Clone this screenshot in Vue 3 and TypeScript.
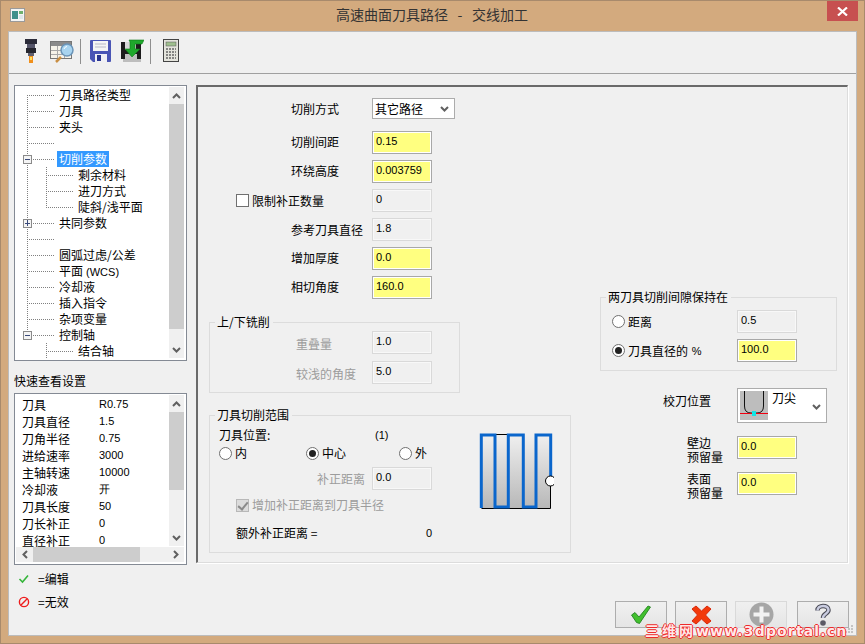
<script setup lang="ts">
interface TreeRow { text: string; level: number; selected?: boolean; latin?: string }
const treeRows: TreeRow[] = [
  { text: '刀具路径类型', level: 0 }, { text: '刀具', level: 0 }, { text: '夹头', level: 0 }, { text: '', level: 0 },
  { text: '切削参数', level: 0, selected: true }, { text: '剩余材料', level: 1 }, { text: '进刀方式', level: 1 }, { text: '陡斜/浅平面', level: 1 },
  { text: '共同参数', level: 0 }, { text: '', level: 0 }, { text: '圆弧过虑/公差', level: 0 }, { text: '平面', latin: ' (WCS)', level: 0 },
  { text: '冷却液', level: 0 }, { text: '插入指令', level: 0 }, { text: '杂项变量', level: 0 }, { text: '控制轴', level: 0 }, { text: '结合轴', level: 1 }
]
const mainStubs = [95, 111, 127, 143, 159, 223, 239, 255, 271, 287, 303, 319, 335]
const subStubs = [175, 191, 207, 351]
const quick: [string, string][] = [
  ['刀具', 'R0.75'], ['刀具直径', '1.5'], ['刀角半径', '0.75'], ['进给速率', '3000'], ['主轴转速', '10000'],
  ['冷却液', '开'], ['刀具长度', '50'], ['刀长补正', '0'], ['直径补正', '0']
]
const formRows = [
  { label: '切削间距', value: '0.15', cls: 'on' },
  { label: '环绕高度', value: '0.003759', cls: 'on' }
]
const lowerRows = [
  { label: '参考刀具直径', value: '1.8', cls: 'off extra' },
  { label: '增加厚度', value: '0.0', cls: 'on' },
  { label: '相切角度', value: '160.0', cls: 'on' }
]
</script>

<template>
  <div class="window">
    <div class="titlebar">
      <div class="title-left">
        <svg width="15" height="14" viewBox="0 0 15 14">
          <rect x="0.5" y="0.5" width="14" height="13" fill="#f4f4f4" stroke="#9a9a9a" />
          <rect x="2" y="3" width="6" height="8" fill="#3f8f8a" />
          <rect x="9" y="3" width="4" height="3" fill="#6db06d" />
          <rect x="9" y="7" width="4" height="4" fill="#dfe6ea" />
        </svg>
      </div>
      <div class="title-text">高速曲面刀具路径 - 交线加工</div>
      <div class="title-right">
        <div class="close">
          <svg width="11" height="9" viewBox="0 0 11 9"><path d="M1 0.5 L10 8.5 M10 0.5 L1 8.5" stroke="#fff" stroke-width="2.2" /></svg>
        </div>
      </div>
    </div>

    <div class="client">
      <div class="toolbar">
        <svg class="t1" width="12" height="24" viewBox="0 0 12 24">
          <rect x="0" y="0" width="12" height="5" fill="#2c2c3a" />
          <rect x="2" y="5" width="8" height="4" fill="#55556a" />
          <rect x="1" y="9" width="10" height="5" fill="#26262f" />
          <rect x="3" y="14" width="6" height="3" fill="#60606e" />
          <rect x="4" y="17" width="4" height="7" fill="#f0901c" />
          <rect x="5" y="18" width="2" height="3" fill="#ffe060" />
        </svg>
        <svg class="t2" width="24" height="23" viewBox="0 0 24 23">
          <rect x="0.5" y="1.5" width="21" height="17" fill="#f6f3ea" stroke="#777" />
          <rect x="1" y="2" width="20" height="4" fill="#8a8a8a" />
          <path d="M1 10.5H21M1 14.5H21M7.5 6V18M14.5 6V18" stroke="#a9a9a9" />
          <path d="M11 17 L6 22" stroke="#c98f45" stroke-width="2.5" />
          <circle cx="17" cy="10" r="6" fill="#a8d4f0" stroke="#6a94b8" stroke-width="1.5" />
          <path d="M14 9 A3.5 3.5 0 0 1 17 6.5" stroke="#fff" fill="none" />
        </svg>
        <span class="sep s1"></span>
        <svg class="t3" width="21" height="22" viewBox="0 0 21 22">
          <path d="M1 0H20Q21 0 21 1V21Q21 22 20 22H3L0 19V1Q0 0 1 0Z" fill="#4a55b5" />
          <rect x="3" y="1" width="15" height="10" fill="#f4f4f4" />
          <path d="M5 4H16M5 7H16" stroke="#b8b8c8" />
          <rect x="5" y="14" width="12" height="8" fill="#f0f0f4" />
          <rect x="7" y="15" width="4" height="6" fill="#2a3590" />
        </svg>
        <svg class="t4" width="23" height="23" viewBox="0 0 23 23">
          <rect x="0" y="3" width="20" height="17" fill="#1c1c1c" />
          <rect x="4" y="3" width="11" height="8" fill="#d8d8d8" />
          <rect x="4" y="15" width="12" height="5" fill="#c0c0c0" />
          <rect x="2" y="20" width="18" height="3" fill="#bdbdbd" />
          <path d="M8 1H23L21 5H14V10H19L11 18L4 10H9V3Z" fill="#1fa82c" stroke="#0f7a1a" stroke-width="0.6" />
        </svg>
        <span class="sep s2"></span>
        <svg class="t5" width="16" height="23" viewBox="0 0 16 23">
          <rect x="0.5" y="0.5" width="15" height="22" fill="#e4e4dc" stroke="#444" />
          <rect x="3" y="3" width="10" height="4" fill="#9fbf8e" stroke="#555" stroke-width="0.5" />
          <path d="M3 10H13M3 13H13M3 16H13M3 19H13" stroke="#666" stroke-width="1.6" stroke-dasharray="2 1" />
        </svg>
      </div>

      <div class="body">
        <div class="left">
          <div class="tree">
            <div class="tree-rows">
              <svg class="tree-lines" width="154" height="273" viewBox="15 86 154 273">
                <g stroke="#808080" stroke-dasharray="1 1" fill="none" shape-rendering="crispEdges">
                  <path d="M27.5 95V335M46.5 167V207M46.5 343V360" />
                  <path v-for="y in mainStubs" :key="y" :d="`M27 ${y + 0.5}H54`" />
                  <path v-for="y in subStubs" :key="'s' + y" :d="`M46 ${y + 0.5}H73`" />
                </g>
                <g v-for="y in [159, 223, 335]" :key="'b' + y" shape-rendering="crispEdges">
                  <rect x="23.5" :y="y - 4" width="8" height="8" fill="#f4f4f4" stroke="#8a8a8a" />
                  <path :d="`M25 ${y + 0.5}H30`" stroke="#3a4a7a" />
                  <path v-if="y === 223" d="M27.5 220V226" stroke="#3a4a7a" />
                </g>
              </svg>
              <div v-for="(r, i) in treeRows" :key="i" class="tree-row" :class="'lv' + r.level">
                <span v-if="r.text" :class="{ selected: r.selected }">{{ r.text }}<span v-if="r.latin" class="num">{{ r.latin }}</span></span>
              </div>
            </div>
            <div class="vbar tree-bar">
              <div class="btn"><svg width="9" height="6" viewBox="0 0 9 6"><path d="M1 5L4.5 1.5L8 5" class="chev" /></svg></div>
              <div class="thumb tree-thumb"></div>
              <div class="spring"></div>
              <div class="btn"><svg width="9" height="6" viewBox="0 0 9 6"><path d="M1 1L4.5 4.5L8 1" class="chev" /></svg></div>
            </div>
          </div>

          <div class="quick-label">快速查看设置</div>
          <div class="list">
            <div class="list-top">
              <div class="list-rows">
                <div v-for="q in quick" :key="q[0]" class="list-row">
                  <span class="col1">{{ q[0] }}</span><span class="num">{{ q[1] }}</span>
                </div>
              </div>
              <div class="vbar list-bar">
                <div class="btn"><svg width="9" height="6" viewBox="0 0 9 6"><path d="M1 5L4.5 1.5L8 5" class="chev" /></svg></div>
                <div class="thumb list-thumb"></div>
                <div class="spring"></div>
                <div class="btn"><svg width="9" height="6" viewBox="0 0 9 6"><path d="M1 1L4.5 4.5L8 1" class="chev" /></svg></div>
              </div>
            </div>
            <div class="hbar">
              <div class="btn"><svg width="6" height="9" viewBox="0 0 6 9"><path d="M5 1L1.5 4.5L5 8" class="chev" /></svg></div>
              <div class="hthumb"></div>
              <div class="spring"></div>
              <div class="btn"><svg width="6" height="9" viewBox="0 0 6 9"><path d="M1 1L4.5 4.5L1 8" class="chev" /></svg></div>
            </div>
          </div>

          <div class="legend-row first">
            <svg width="12" height="10" viewBox="0 0 12 10"><path d="M1.5 5L4.5 8L10 1.5" stroke="#35b53a" stroke-width="1.6" fill="none" /></svg>
            <span>=编辑</span>
          </div>
          <div class="legend-row">
            <svg width="12" height="12" viewBox="0 0 12 12"><circle cx="6" cy="6" r="4.6" fill="none" stroke="#ee1c1c" stroke-width="1.4" /><path d="M2.8 9.2L9.2 2.8" stroke="#ee1c1c" stroke-width="1.4" /></svg>
            <span>=无效</span>
          </div>
        </div>

        <div class="right">
          <div class="panel">
            <div class="pane-left">
              <div class="row select-row">
                <span class="lab lab-main flat">切削方式</span>
                <div class="select"><span>其它路径</span><svg width="9" height="6" viewBox="0 0 9 6"><path d="M1 1L4.5 4.5L8 1" class="chev" /></svg></div>
              </div>
              <div v-for="r in formRows" :key="r.label" class="row">
                <span class="lab lab-main">{{ r.label }}</span>
                <span class="field" :class="r.cls">{{ r.value }}</span>
              </div>
              <div class="row">
                <span class="lab lab-check"><i class="check"></i>限制补正数量</span>
                <span class="field off">0</span>
              </div>
              <div v-for="r in lowerRows" :key="r.label" class="row" :class="{ extra: r.cls.includes('extra') }">
                <span class="lab lab-main">{{ r.label }}</span>
                <span class="field" :class="r.cls">{{ r.value }}</span>
              </div>

              <fieldset class="group g1">
                <legend>上/下铣削</legend>
                <div class="row tight"><span class="lab lab-sub gray">重叠量</span><span class="field off">1.0</span></div>
                <div class="row tight second"><span class="lab lab-sub gray">较浅的角度</span><span class="field off">5.0</span></div>
              </fieldset>

              <fieldset class="group g2">
                <legend>刀具切削范围</legend>
                <div class="g2-inner">
                  <div class="g2-form">
                    <div class="line pos-line"><span class="pos-label">刀具位置:</span><span class="num">(1)</span></div>
                    <div class="line radios">
                      <label class="radio-item w87"><i class="radio"></i>内</label>
                      <label class="radio-item w93"><i class="radio on-dot"></i>中心</label>
                      <label class="radio-item"><i class="radio"></i>外</label>
                    </div>
                    <div class="row tight comp"><span class="lab lab-comp gray">补正距离</span><span class="field off">0.0</span></div>
                    <div class="line add-line gray"><i class="check checked"></i>增加补正距离到刀具半径</div>
                    <div class="line extra-line"><span class="extra-label">额外补正距离 =</span><span class="num">0</span></div>
                  </div>
                  <svg class="diagram" width="75" height="78" viewBox="479 433 75 78">
                    <defs>
                      <linearGradient id="fade" x1="0" y1="0" x2="0" y2="1">
                        <stop offset="0" stop-color="#f0f0f0" />
                        <stop offset="1" stop-color="#b8b8b8" />
                      </linearGradient>
                    </defs>
                    <rect x="481" y="434" width="70" height="74" fill="url(#fade)" />
                    <path d="M481.5 508.5H550.5V481M495 434.5H508" stroke="#000" fill="none" />
                    <path d="M481.3 508V435H495V507H508.3V435H523.3V507H536V435H550.7V481" stroke="#0a66cc" stroke-width="3" fill="none" />
                    <circle cx="550.5" cy="481" r="5" fill="#fff" stroke="#000" />
                  </svg>
                </div>
              </fieldset>
            </div>

            <div class="pane-right">
              <fieldset class="group g3">
                <legend>两刀具切削间隙保持在</legend>
                <div class="gap-row first">
                  <label class="radio-item gap-label"><i class="radio"></i>距离</label>
                  <span class="field off">0.5</span>
                </div>
                <div class="gap-row">
                  <label class="radio-item gap-label"><i class="radio on-dot"></i>刀具直径的 <span class="num pct">%</span></label>
                  <span class="field on">100.0</span>
                </div>
              </fieldset>

              <div class="combo-row">
                <span class="combo-label">校刀位置</span>
                <div class="combo">
                  <svg width="28" height="29" viewBox="0 0 28 29">
                    <rect width="28" height="29" fill="#bdbdbd" />
                    <path d="M4.5 0V15Q4.5 22 11 22H17Q23.5 22 23.5 15V0" fill="none" stroke="#111" />
                    <path d="M0 22.5H28" stroke="#f00010" />
                    <rect x="12" y="20" width="4" height="5" fill="#12e5e5" />
                  </svg>
                  <span class="combo-text">刀尖</span>
                  <svg class="combo-chev" width="9" height="6" viewBox="0 0 9 6"><path d="M1 1L4.5 4.5L8 1" class="chev" /></svg>
                </div>
              </div>

              <div class="stock-row first">
                <span class="stock-label">壁边<br />预留量</span>
                <span class="field on">0.0</span>
              </div>
              <div class="stock-row">
                <span class="stock-label">表面<br />预留量</span>
                <span class="field on">0.0</span>
              </div>
            </div>
          </div>

          <div class="buttons">
            <div class="bt">
              <svg width="22" height="20" viewBox="0 0 22 20"><path d="M1.500 10L5 7.500L9 12L18 1L20.500 2L9.500 18.500L6.500 17.500Z" fill="#42c02e" stroke="#1a7a1a" stroke-width="0.8" /></svg>
            </div>
            <div class="bt">
              <svg width="21" height="20" viewBox="0 0 21 20"><path d="M1 4L5 1L10.500 6L16 1L20 4L14.500 10L20 16L16 19L10.500 14L5 19L1 16L6.500 10Z" fill="#f23a0c" stroke="#d8280a" /></svg>
            </div>
            <div class="bt dim">
              <svg width="25" height="25" viewBox="0 0 25 25"><circle cx="12.500" cy="12.500" r="12" fill="#a6a6a6" /><path d="M12.500 4.500V20.500M4.500 12.500H20.500" stroke="#f2f2f2" stroke-width="4" /></svg>
            </div>
            <div class="bt last">
              <svg width="18" height="23" viewBox="0 0 18 23">
                <path d="M3.500 7.500C3.500 1.500 14.500 1.500 14.500 7C14.500 11 9 10.500 9 15" fill="none" stroke="#4a4a55" stroke-width="4.500" />
                <path d="M3.500 7.500C3.500 1.500 14.500 1.500 14.500 7C14.500 11 9 10.500 9 15" fill="none" stroke="#c9cce0" stroke-width="2.500" />
                <circle cx="9" cy="20" r="2.800" fill="#5a5a66" />
              </svg>
            </div>
          </div>
        </div>
      </div>
    </div>

    <svg class="grip" width="9" height="9" viewBox="0 0 9 9"><path d="M6 1h2v2h-2zM3 4h2v2h-2zM6 4h2v2h-2zM0 7h2v2h-2zM3 7h2v2h-2zM6 7h2v2h-2z" fill="#c4c4c4" /></svg>
    <div class="watermark"><span class="wm-cjk">三维网</span>www.3dportal.cn</div>
  </div>
</template>

<style>
html, body { margin: 0; padding: 0; background: #d3aa7e; }
</style>

<style scoped>
.window {
  position: relative;
  box-sizing: border-box;
  width: 865px;
  height: 644px;
  display: flex;
  flex-direction: column;
  background: #d3aa7e;
  border: 1px solid #a88a6c;
  overflow: hidden;
  font: 12px/16px "Liberation Sans", "Noto Sans CJK SC", sans-serif;
  color: #000;
}
.titlebar {
  height: 30px;
  flex: none;
  display: grid;
  grid-template-columns: 1fr auto 1fr;
}
.title-left { padding: 7px 0 0 9px; }
.title-text {
  font-size: 14px;
  line-height: 27px;
  word-spacing: 6.5px;
  color: #333;
  font-family: "Noto Sans CJK SC", "Liberation Sans", sans-serif;
  margin-left: -1px;
}
.title-right { display: flex; justify-content: flex-end; padding-right: 6px; }
.close {
  width: 31px;
  height: 20px;
  background: #c75050;
  display: flex;
  align-items: center;
  justify-content: center;
}
.client {
  flex: 1;
  margin: 0 7px 7px;
  background: #f0f0f0;
  border: 1px solid #bcbcbc;
  display: flex;
  flex-direction: column;
  min-height: 0;
}
.toolbar {
  box-sizing: border-box;
  height: 42px;
  flex: none;
  display: flex;
  align-items: flex-start;
  padding: 7px 0 0 16px;
  border-bottom: 1px solid #a0a0a0;
}
.toolbar svg { flex: none; }
.t2 { margin-left: 13px; margin-top: 1px; }
.sep { width: 1px; height: 25px; background: #8e8e8e; flex: none; }
.s1 { margin-left: 6px; }
.t3 { margin-left: 9px; margin-top: 1px; }
.t4 { margin-left: 10px; }
.s2 { margin-left: 6px; }
.t5 { margin-left: 12px; }

.body { display: flex; padding: 11px 0 0 5px; flex: 1; min-height: 0; }
.left { width: 173px; flex: none; }
.right { margin-left: 9px; width: 652px; flex: none; }

.tree {
  box-sizing: border-box;
  height: 276px;
  border: 1px solid #848a94;
  background: #fff;
  display: flex;
}
.tree-rows { position: relative; flex: 1; padding-top: 1px; overflow: hidden; font-family: "Noto Sans CJK SC", "Liberation Sans", sans-serif; }
.tree-lines { position: absolute; left: 0; top: 0; }
.tree-row { position: relative; height: 16px; white-space: pre; line-height: 16px; }
.lv0 { padding-left: 42px; }
.lv1 { padding-left: 61px; }
.tree-row > span { display: inline-block; padding: 0 2px; height: 16px; }
.selected { background: #3399ff; color: #fff; }
.vbar { width: 15px; flex: none; display: flex; flex-direction: column; background: #f0f0f0; }
.tree-bar { margin: 1px 2px 2px 0; }
.btn { flex: none; width: 15px; height: 17px; display: flex; align-items: center; justify-content: center; }
.spring { flex: 1; }
.thumb { background: #cdcdcd; flex: none; }
.tree-thumb { height: 225px; }
.list-thumb { height: 78px; }
.chev { fill: none; stroke: #606060; stroke-width: 2; }

.quick-label { margin-top: 12px; height: 16px; line-height: 16px; font-family: "Noto Sans CJK SC", sans-serif; }
.list {
  box-sizing: border-box;
  margin-top: 4px;
  height: 172px;
  border: 1px solid #848a94;
  background: #fff;
  display: flex;
  flex-direction: column;
}
.list-top { height: 153px; display: flex; flex: none; }
.list-rows { flex: 1; overflow: hidden; padding-top: 2px; }
.list-bar { margin: 1px 2px 1px 0; }
.list-row { height: 17px; line-height: 17px; padding-left: 7px; display: flex; white-space: nowrap; }
.col1 { width: 77px; font-family: "Noto Sans CJK SC", sans-serif; }
.hbar { height: 15px; margin: 0 2px 2px 1px; display: flex; background: #f0f0f0; }
.hbar .btn { height: 15px; width: 17px; }
.hthumb { width: 107px; background: #cdcdcd; }
.legend-row { display: flex; align-items: center; height: 16px; margin-top: 7px; padding-left: 4px; }
.legend-row.first { margin-top: 6px; }
.legend-row svg { flex: none; width: 12px; }
.legend-row span { margin-left: 8px; font-family: "Noto Sans CJK SC", sans-serif; }

.num { font-family: "Liberation Sans", sans-serif; font-size: 11px; }

.panel {
  box-sizing: border-box;
  height: 478px;
  display: flex;
  background: #f0f0f0;
  border-style: solid;
  border-color: #6a6a6a #dcdcdc #dcdcdc #6a6a6a;
  border-width: 2px 1px 1px 2px;
  box-shadow: 1px 1px 0 #fff;
  font-family: "Noto Sans CJK SC", "Liberation Sans", sans-serif;
}
.pane-left { width: 374px; flex: none; padding-top: 11px; }
.pane-right { flex: 1; padding-left: 28px; }

.row { display: flex; align-items: center; height: 23px; margin-bottom: 6px; }
.row.extra { margin-top: 1px; }
.select-row { height: 21px; margin-bottom: 12px; }
.lab { box-sizing: border-box; flex: none; white-space: nowrap; }
.lab-main { width: 174px; padding: 0 0 2px 93px; }
.lab-main.flat, .row.extra .lab-main { padding-bottom: 0; }
.lab-check { width: 174px; padding-left: 38px; display: flex; align-items: center; }
.lab-sub { width: 162px; padding: 2px 0 0 86px; }
.lab-comp { width: 162px; padding-left: 107px; }
.gray { color: #9c9c9c; }

.field {
  box-sizing: border-box;
  flex: none;
  width: 60px;
  height: 23px;
  padding: 0 0 0 3px;
  font: 11px/18px "Liberation Sans", sans-serif;
  color: #000;
}
.field.on { background: #ffff80; border: 1px solid #a8a8a8; box-shadow: inset 0 0 0 1px #fff; }
.field.off { background: #f0f0f0; border: 1px solid #d9d9d9; box-shadow: inset 0 0 0 1px #f8f8f8; }

.select {
  box-sizing: border-box;
  width: 83px;
  height: 21px;
  background: #fff;
  border: 1px solid #acacac;
  display: flex;
  align-items: center;
  justify-content: space-between;
  padding: 0 5px 0 2px;
}

.check {
  box-sizing: border-box;
  display: inline-block;
  width: 13px;
  height: 13px;
  border: 1px solid #707070;
  background: #fff;
  margin-right: 3px;
  flex: none;
  position: relative;
}
.check.checked { background: #dcdcdc; border-color: #b8b8b8; }
.check.checked::after {
  content: "";
  position: absolute;
  left: 3px;
  top: 0;
  width: 4px;
  height: 8px;
  border: solid #8a8a8a;
  border-width: 0 2px 2px 0;
  transform: rotate(40deg);
}
.radio {
  box-sizing: border-box;
  display: inline-block;
  width: 13px;
  height: 13px;
  border: 1px solid #707070;
  border-radius: 50%;
  background: #fff;
  margin-right: 3px;
  flex: none;
  position: relative;
}
.radio.on-dot::after {
  content: "";
  position: absolute;
  left: 2px;
  top: 2px;
  width: 7px;
  height: 7px;
  border-radius: 50%;
  background: #222;
}
.radio-item { display: flex; align-items: center; white-space: pre; }

.group {
  margin: 0;
  padding: 0;
  min-width: 0;
  box-sizing: border-box;
  border: 1px solid #dcdcdc;
}
.group legend { padding: 0 3px 0 2px; margin-left: 5px; line-height: 14px; height: 14px; }
.g1 { margin: 16px 0 0 11px; width: 251px; padding: 2px 0 8px; }
.row.tight { margin-bottom: 0; }
.row.second { margin-top: 7px; }
.g2 { margin: 15px 0 0 11px; width: 362px; padding-bottom: 11px; }
.g2-inner { display: flex; }
.g2-form { width: 269px; flex: none; padding-top: 5px; }
.line { height: 16px; display: flex; align-items: center; white-space: nowrap; }
.pos-line { padding-left: 9px; }
.pos-label { width: 156px; }
.radios { margin-top: 2px; padding-left: 9px; }
.w87 { width: 87px; }
.w93 { width: 93px; }
.row.comp { margin-top: 6px; }
.add-line { margin-top: 7px; padding-left: 26px; }
.extra-line { margin-top: 12px; padding-left: 26px; }
.extra-label { width: 190px; }
.diagram { margin-top: 11px; flex: none; }

.g3 { margin-top: 203px; width: 237px; padding-bottom: 8px; }
.gap-row { display: flex; align-items: center; height: 23px; margin-top: 6px; }
.gap-label { width: 136px; padding-left: 11px; box-sizing: border-box; flex: none; }
.pct { margin-left: 1px; }
.combo-row { display: flex; align-items: flex-start; margin-top: 17px; }
.combo-label { width: 137px; padding: 5px 0 0 63px; box-sizing: border-box; }
.combo {
  box-sizing: border-box;
  width: 90px;
  height: 35px;
  background: #fff;
  border: 1px solid #acacac;
  padding: 2px;
  display: flex;
  align-items: flex-start;
  position: relative;
}
.combo-text { margin-left: 4px; line-height: 14px; }
.combo-chev { margin: 13px 3px 0 auto; }
.stock-row { display: flex; align-items: center; height: 23px; margin-top: 13px; }
.stock-label { box-sizing: border-box; width: 137px; padding: 4px 0 0 87px; line-height: 14px; }

.buttons { display: flex; justify-content: flex-end; margin: 38px -1px 0 0; }
.bt {
  box-sizing: border-box;
  width: 52px;
  height: 27px;
  margin-left: 8px;
  border: 1px solid #adadad;
  background: linear-gradient(#f0f0f0, #e5e5e5);
  display: flex;
  align-items: center;
  justify-content: center;
  overflow: visible;
}
.bt.dim { border-color: #d9d9d9; }
.bt.last { margin-left: 10px; }

.grip { position: absolute; right: 10px; bottom: 10px; }
.watermark {
  position: absolute;
  left: 644px;
  top: 622px;
  white-space: nowrap;
  font: bold 14px/16px "DejaVu Sans", "Noto Sans CJK SC", sans-serif;
  letter-spacing: 1.15px;
  color: #ffe8e8;
  text-shadow: -1px 0 0 #ee2a2a, 1px 0 0 #ee2a2a, 0 -1px 0 #ee2a2a, 0 1px 0 #ee2a2a;
}
.wm-cjk { letter-spacing: 3px; }
</style>
